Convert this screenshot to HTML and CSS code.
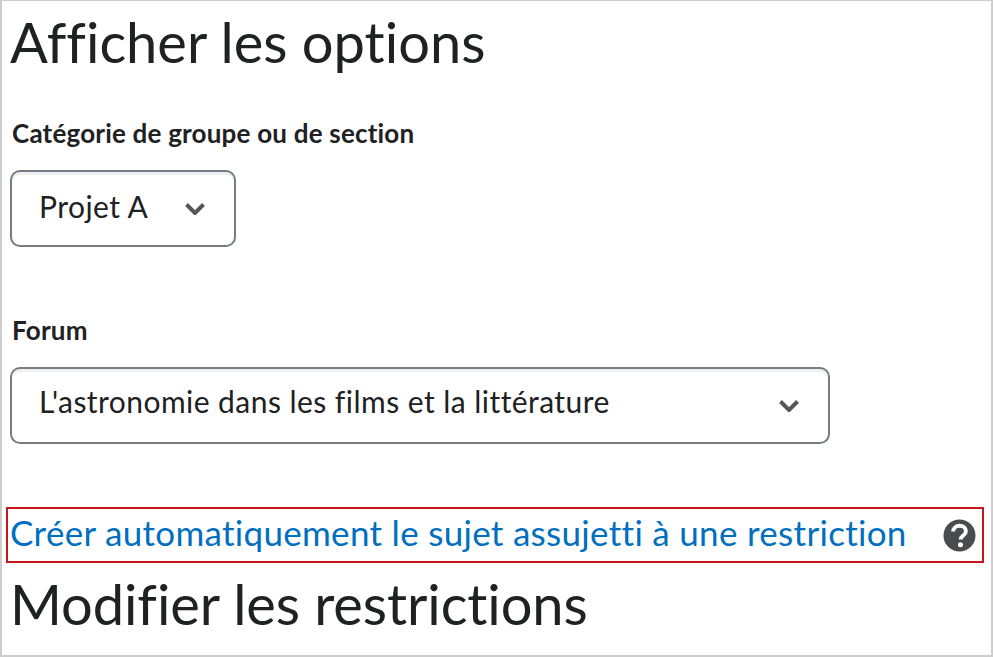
FILE: index.html
```html
<!DOCTYPE html>
<html lang="fr">
<head>
<meta charset="utf-8">
<title>Afficher les options</title>
<link rel="stylesheet" href="styles.css">
</head>
<body>
<main class="frame">
  <h1 class="title">Afficher les options</h1>
  <label class="label first">Catégorie de groupe ou de section</label>
  <div class="select small"><span>Projet A</span>
    <svg class="chev" viewBox="0 0 20 13"><path d="M1.500 2.500l8.500 8.500 8.500-8.500" /></svg>
  </div>
  <label class="label second">Forum</label>
  <div class="select wide"><span>L'astronomie dans les films et la littérature</span>
    <svg class="chev" viewBox="0 0 20 13"><path d="M1.500 2.500l8.500 8.500 8.500-8.500" /></svg>
  </div>
  <div class="callout">
    <a class="link" href="#">Créer automatiquement le sujet assujetti à une restriction</a>
    <svg class="help" viewBox="0 0 34 34"><circle cx="17" cy="17" r="16.5" fill="#494c4e"/><path d="M10.500 13c0-3.700 2.900-6 6.600-6 3.700 0 6.500 2.300 6.500 5.500 0 4.600-5.300 4.500-5.300 8.500" fill="none" stroke="#fff" stroke-width="4" /><circle cx="18" cy="26.500" r="2.600" fill="#fff"/></svg>
  </div>
  <h1 class="title bottom">Modifier les restrictions</h1>
</main>
</body>
</html>
```
FILE: styles.css
```css
html, body { margin: 0; padding: 0; background: #fff; }
body { font-family: Lato, "Noto Sans", sans-serif; color: #202122; font-variant-ligatures: none; }
.frame {
  box-sizing: border-box;
  width: 993px;
  height: 657px;
  border: 2px solid #cdcdcd;
  border-top-width: 1px;
  padding: 0 0 0 8px;
  overflow: hidden;
}
.title { margin: 0; font-weight: 400; font-size: 56px; line-height: 84px; }
.title:first-child { margin-top: -1px; }
.label { display: block; margin-left: 2px; font-size: 26px; font-weight: 700; line-height: 30px; letter-spacing: .2px; }
.label.first { margin-top: 34px; }
.label.second { margin-top: 68px; }
.select {
  box-sizing: border-box;
  display: flex;
  align-items: center;
  justify-content: space-between;
  height: 77px;
  margin-top: 22px;
  padding: 0 29px 0 28px;
  border: 2px solid #777c80;
  border-radius: 10px;
  box-shadow: inset 0 3px 0 #eef0f2;
  font-size: 30px;
  letter-spacing: .45px;
}
.select span { margin-bottom: 6px; margin-left: -1px; }
.small { width: 226px; }
.wide { width: 820px; }
.wide span { margin-bottom: 10px; }
.chev { width: 20px; height: 13px; fill: none; stroke: #53565a; stroke-width: 4px; flex: none; }
.callout {
  box-sizing: border-box;
  display: flex;
  align-items: center;
  justify-content: space-between;
  width: 978px;
  height: 56px;
  margin: 63px 0 0 -4px;
  padding: 0 6px 0 2px;
  border: 2px solid #c8161d;
}
.link { color: #006fbf; font-size: 35px; letter-spacing: .3px; text-decoration: none; margin-bottom: 6px; }
.help { width: 33px; height: 33px; }
.bottom { margin-top: -1px; letter-spacing: -.08px; }
```
